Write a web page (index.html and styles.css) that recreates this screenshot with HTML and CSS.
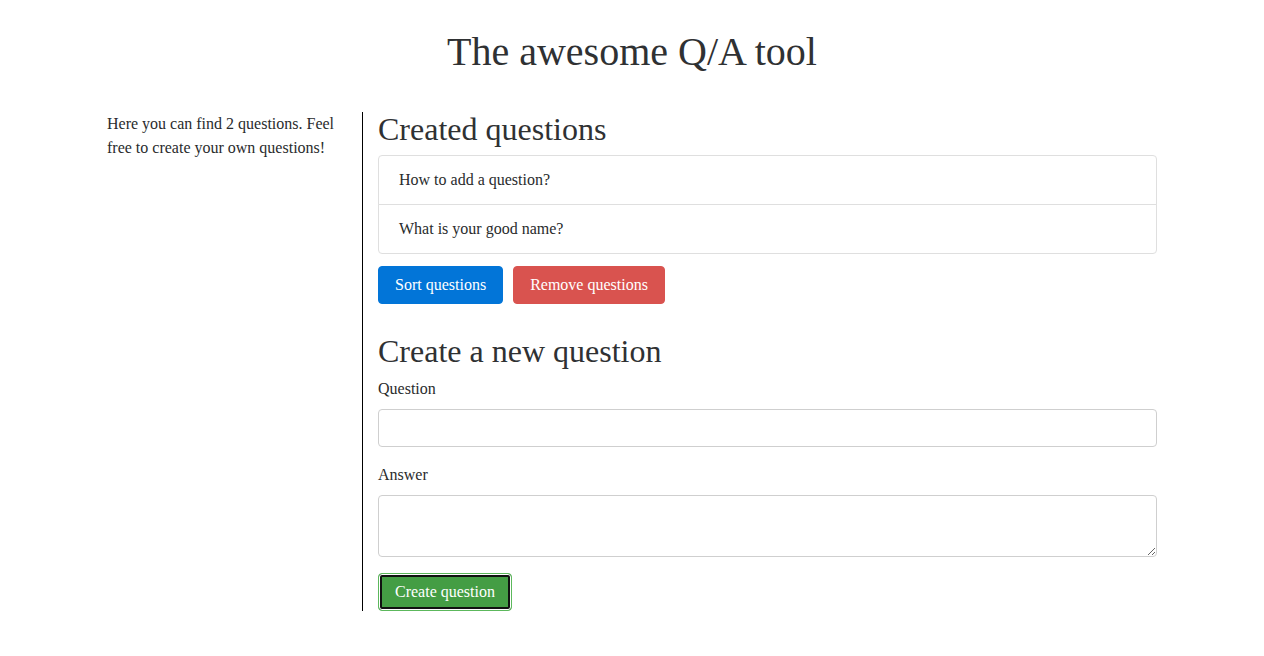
FILE: index.html
```html
<!DOCTYPE html>
<html lang="en">
<head>
<meta charset="utf-8">
<title>The awesome Q/A tool</title>
<link rel="stylesheet" href="styles.css">
</head>
<body>
<header class="header">
  <h1 class="title">The awesome Q/A tool</h1>
</header>
<div class="container">
  <aside class="sidebar">
    <p class="intro">Here you can find 2 questions. Feel free to create your own questions!</p>
  </aside>
  <main class="content">
    <h2 class="section-title">Created questions</h2>
    <ul class="list-group">
      <li class="list-item">How to add a question?</li>
      <li class="list-item">What is your good name?</li>
    </ul>
    <div class="actions">
      <button class="btn btn-primary" type="button">Sort questions</button>
      <button class="btn btn-danger" type="button">Remove questions</button>
    </div>
    <h2 class="section-title section-title--form">Create a new question</h2>
    <form class="form">
      <div class="form-group">
        <label class="label" for="question">Question</label>
        <input class="form-control" id="question" type="text">
      </div>
      <div class="form-group">
        <label class="label" for="answer">Answer</label>
        <textarea class="form-control textarea" id="answer" rows="2"></textarea>
      </div>
      <button class="btn btn-success btn-focus" type="button">Create question</button>
    </form>
  </main>
</div>
</body>
</html>
```

FILE: styles.css
```css
* {
  box-sizing: border-box;
}

html, body {
  margin: 0;
  padding: 0;
  background: #fff;
}

body {
  font-family: "Liberation Serif", "Times New Roman", serif;
  font-size: 16px;
  line-height: 1.5;
  color: #292b2c;
}

.header {
  padding-top: 30px;
  margin-bottom: 38px;
}

.title {
  margin: 0;
  text-align: center;
  font-size: 40px;
  font-weight: 400;
  line-height: 1.1;
  color: #2f3133;
}

.container {
  width: 1080px;
  margin: 0 auto;
  display: flex;
}

.sidebar {
  width: 270px;
  flex: none;
  padding: 0 15px;
}

.intro {
  margin: 0;
}

.content {
  flex: 1;
  border-left: 1px solid #000;
  padding: 0 15px;
}

.section-title {
  margin: 0 0 8px;
  font-size: 32px;
  font-weight: 400;
  line-height: 1.1;
  color: #2f3133;
}

.section-title--form {
  margin-top: 30px;
}

.list-group {
  list-style: none;
  margin: 0;
  padding: 0;
  display: flex;
  flex-direction: column;
}

.list-item {
  padding: 12px 20px;
  border: 1px solid #dfdfdf;
  margin-bottom: -1px;
}

.list-item:first-child {
  border-radius: 4px 4px 0 0;
}

.list-item:last-child {
  border-radius: 0 0 4px 4px;
  margin-bottom: 0;
}

.actions {
  display: flex;
  gap: 10px;
  margin-top: 12px;
}

.btn {
  font-family: inherit;
  font-size: 16px;
  line-height: 1.5;
  padding: 6px 16px;
  border: 1px solid transparent;
  border-radius: 4px;
  color: #fff;
  cursor: pointer;
}

.btn-primary {
  background: #0275d8;
  border-color: #0275d8;
}

.btn-danger {
  background: #d9534f;
  border-color: #d9534f;
}

.btn-success {
  background: #449d44;
  border-color: #5cb85c;
}

.btn-focus {
  box-shadow: inset 0 0 0 1px #fff, inset 0 0 0 3px #111;
}

.form {
  margin: 0;
}

.form-group {
  margin-bottom: 16px;
}

.label {
  display: block;
  margin-bottom: 8px;
}

.form-control {
  display: block;
  width: 100%;
  height: 38px;
  padding: 8px 12px;
  font-family: inherit;
  font-size: 16px;
  line-height: 1.25;
  color: #464a4c;
  background: #fff;
  border: 1px solid #cfcfcf;
  border-radius: 4px;
  margin: 0;
}

.textarea {
  height: 62px;
  resize: vertical;
}
```
